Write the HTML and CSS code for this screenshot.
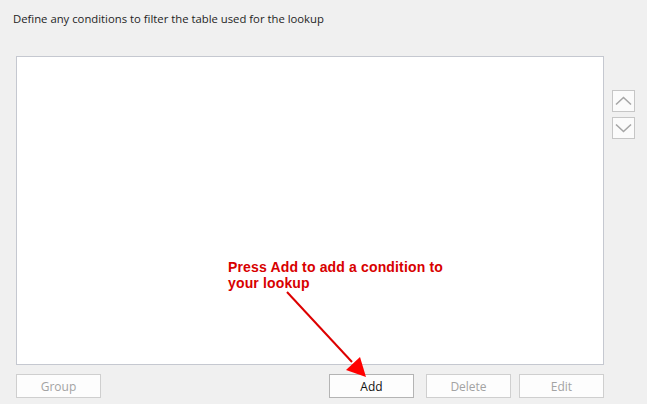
FILE: index.html
```html
<!DOCTYPE html>
<html lang="en">
<head>
    <meta charset="UTF-8">
    <title>Lookup Filter</title>
    <link rel="stylesheet" href="styles.css">
</head>
<body>
    <div class="page">
        <div class="intro">Define any conditions to filter the table used for the lookup</div>
        <div class="main-row">
            <div class="conditions"></div>
            <div class="move-buttons">
                <button class="move-btn" disabled>
                    <svg width="17" height="10" viewBox="0 0 17 10"><path d="M1 8.5 L8.5 1.5 L16 8.5" fill="none" stroke="#a6a6a6" stroke-width="1.6"/></svg>
                </button>
                <button class="move-btn" disabled>
                    <svg width="17" height="10" viewBox="0 0 17 10"><path d="M1 1.5 L8.5 8.5 L16 1.5" fill="none" stroke="#a6a6a6" stroke-width="1.6"/></svg>
                </button>
            </div>
        </div>
        <div class="button-row">
            <button class="btn" disabled>Group</button>
            <button class="btn btn-add">Add</button>
            <button class="btn btn-delete" disabled>Delete</button>
            <button class="btn btn-edit" disabled>Edit</button>
        </div>

        <div class="hint">Press Add to add a condition to<br>your lookup</div>
        <svg class="hint-arrow" width="647" height="404" viewBox="0 0 647 404">
            <line x1="287" y1="292" x2="352" y2="362" stroke="#dd0000" stroke-width="2"/>
            <polygon points="366,377 346,370 360,357" fill="#ff0000"/>
        </svg>
    </div>
</body>
</html>
```

FILE: styles.css
```css
body {
    margin: 0;
    background: #f0f0f0;
    font-family: "Open Sans", "Noto Sans", sans-serif;
    font-size: 11.3px;
    color: #1e1e1e;
}
.page {
    position: relative;
    width: 647px;
    height: 404px;
    overflow: hidden;
}
.intro {
    padding: 11px 0 0 13px;
    height: 56px;
    box-sizing: border-box;
    line-height: 16px;
}
.main-row {
    display: flex;
    align-items: flex-start;
    padding-left: 16px;
}
.conditions {
    width: 586px;
    height: 307px;
    background: #fff;
    border: 1px solid #c5c8d0;
}
.move-buttons {
    display: flex;
    flex-direction: column;
    gap: 5px;
    margin: 34px 0 0 8px;
}
.move-btn {
    width: 23px;
    height: 22px;
    padding: 0;
    border: 1px solid #c6c6c6;
    background: #fbfbfb;
    display: flex;
    align-items: center;
    justify-content: center;
}
.button-row {
    display: flex;
    padding: 9px 0 0 16px;
}
.btn {
    width: 85px;
    height: 24px;
    padding: 0;
    font-family: inherit;
    font-size: 12px;
    background: #fdfdfd;
    border: 1px solid #cfcfcf;
    color: #a3a3a3;
}
.btn-add {
    margin-left: 228px;
    border-color: #b4b4b4;
    color: #111;
}
.btn-delete {
    margin-left: 12px;
}
.btn-edit {
    margin-left: 8px;
}
.hint {
    position: absolute;
    left: 228px;
    top: 259px;
    font-family: "Liberation Sans", Arial, sans-serif;
    font-weight: bold;
    font-size: 14px;
    letter-spacing: 0.15px;
    line-height: 16px;
    color: #d80000;
}
.hint-arrow {
    position: absolute;
    left: 0;
    top: 0;
    pointer-events: none;
}
```
